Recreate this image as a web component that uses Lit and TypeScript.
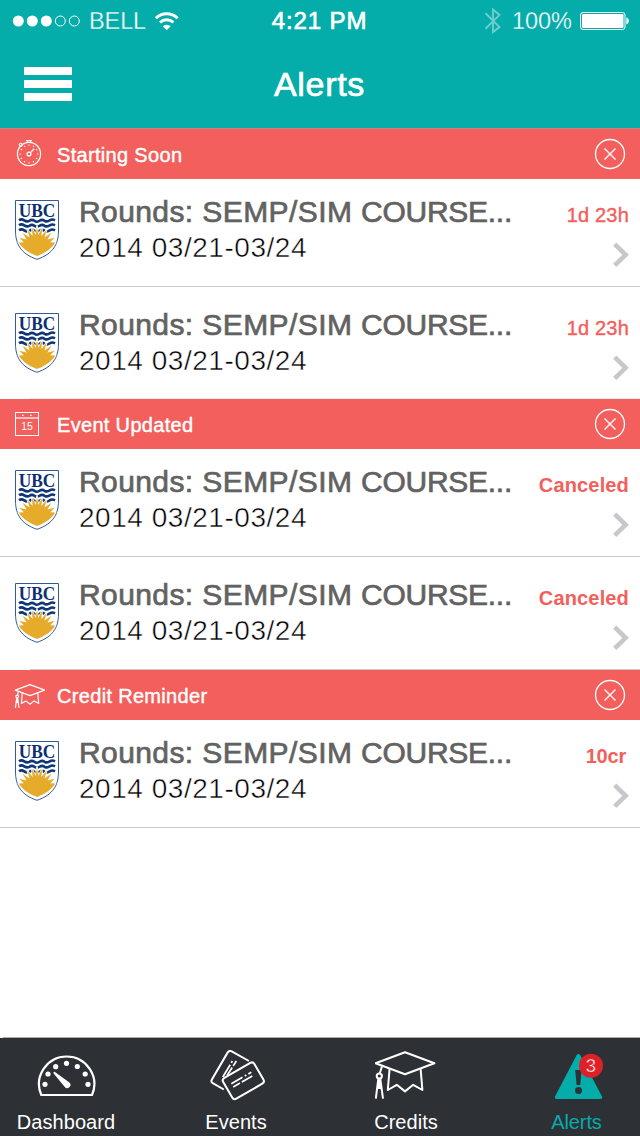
import { LitElement, html, css, svg } from "lit";
import { customElement, property } from "lit/decorators.js";

interface AlertItem {
  // The title is split before its last word so each part can carry its own tracking.
  lead: string;
  tail: string;
  date: string;
  status: string;
  tone: "medium" | "bold" | "inset";
}

interface AlertGroup {
  name: string;
  icon: "watch" | "calendar" | "cap";
  items: AlertItem[];
}

const event = (status: string, tone: AlertItem["tone"]): AlertItem => ({
  lead: "Rounds: SEMP/SIM ",
  tail: "COURSE...",
  date: "2014 03/21-03/24",
  status,
  tone,
});

const GROUPS: AlertGroup[] = [
  { name: "Starting Soon", icon: "watch", items: [event("1d 23h", "medium"), event("1d 23h", "medium")] },
  { name: "Event Updated", icon: "calendar", items: [event("Canceled", "bold"), event("Canceled", "bold")] },
  { name: "Credit Reminder", icon: "cap", items: [event("10cr", "inset")] },
];

// Mortarboard outline, shared by the section header and the tab bar.
const capShape = svg`
  <path d="M1.6 12.3 31 1.2 60.4 12.3 31 23.2Z"/>
  <path d="M15.6 17.6 13.8 39 22.8 33.8 31 40.4 39.2 33.8 48.4 39 46.6 17.6"/>
  <path d="M8 15.3 5.8 22.2"/>
  <circle cx="5.3" cy="25" r="2.6"/>
  <path d="M4.3 28 1.8 47.6M6.3 28 9 47.6M5.3 29 4.4 38M5.3 29 6.4 38"/>`;

const ticks = [30, 60, 90, 120, 150, 180, 210, 240, 270, 300, 330, 360];

const icons = {
  watch: html`<svg width="30" height="30" viewBox="14 139 30 30" fill="none" stroke="#fff">
    <circle cx="29" cy="154" r="11.6" stroke-width="1.2"/>
    <path d="M26 140.700h6M27.500 141v2M30.500 141v2" stroke-width="1.2"/>
    <circle cx="20.800" cy="144.800" r="1.600" stroke-width="1"/>
    <circle cx="29" cy="154" r="1.900" stroke-width="1.300"/>
    <path d="M30.400 152.600 34.200 148.800" stroke-width="1.300"/>
    ${ticks.map((a) => svg`<path d="M29 144.400v1.600" stroke-width=".9" transform="rotate(${a} 29 154)"/>`)}
  </svg>`,
  calendar: html`<svg width="30" height="30" viewBox="14 409 30 30" fill="none" stroke="#fff">
    <rect x="15.500" y="412.500" width="23" height="23"/>
    <path d="M16 418h22" stroke-width="2" stroke-opacity=".6"/>
    <path d="M22 415.300h1.500M30.200 415.300h1.500" stroke-width="1.200"/>
    <text x="27" y="430" fill="#fff" stroke="none" font-size="10.500" text-anchor="middle">15</text>
  </svg>`,
  cap: html`<svg width="31" height="25" viewBox="-1 -2 62 50" fill="none" stroke="#fff" stroke-width="2.400" stroke-linejoin="round">${capShape}</svg>`,
};

@customElement("ubc-crest")
class UbcCrest extends LitElement {
  static styles = css`
    :host { display: block; width: 44px; height: 60px; }
    svg { display: block; }
    text { font-family: "Liberation Serif", serif; font-weight: 700; }
    .sun { paint-order: stroke; }
  `;
  render() {
    return html`<svg width="44" height="60" viewBox="0 0 44 60">
      <path d="M.5.500H43.500V31C43.500 44 38 54 22 59.300 6 54 .5 44 .5 31Z" fill="#fff" stroke="#2f5c96"/>
      <text x="3.800" y="16.500" font-size="18.700" fill="#0c2f6f" textLength="36.600" lengthAdjust="spacingAndGlyphs">UBC</text>
      <g fill="none" stroke="#0f3676" stroke-width="2.600">
        <path d="M4 20.300q2.500-1.800 5.200 0t5.200.5q2.500-1.800 5 0 2.600 1.800 5.200 0 2.500-1.800 5 0 2.600 1.500 5.200-.5 2.500-1.500 5.200 0"/>
        <path d="M4 25.300q2.500-1.800 5.200 0t5.200.5q2.500-1.800 5 0 2.600 1.800 5.200 0 2.500-1.800 5 0 2.600 1.500 5.200-.5 2.500-1.500 5.200 0"/>
        <path d="M4 30.300q2.500-1.800 5.200 0t5.200.5q2.500-1.800 5 0 2.600 1.800 5.200 0 2.500-1.800 5 0 2.600 1.500 5.200-.5 2.500-1.500 5.200 0"/>
      </g>
      <path class="sun" d="M22 25.500 23.200 35 27.200 27.500 26.400 36 31.800 29.500 29.400 37.500 36.500 32.800 32.400 39.500 39.700 37.800 35.200 42.300 40.200 42.600C36.600 48.500 30 53.500 22 56 14 53.500 7.400 48.500 3.800 42.600L8.800 42.300 4.300 37.800 11.600 39.500 7.500 32.800 14.600 37.500 12.200 29.500 17.600 36 16.800 27.500 20.800 35Z" fill="#e6ab2b" stroke="#fff" stroke-width="1.500"/>
    </svg>`;
  }
}

@customElement("alert-row")
class AlertRow extends LitElement {
  @property({ attribute: false }) item!: AlertItem;

  static styles = css`
    :host { display: block; box-sizing: border-box; }
    .row { display: flex; }
    .crest { margin: 21px 20px 0 15px; }
    .text { flex: 1; padding-top: 15px; white-space: pre; }
    .title, .date { height: 36px; line-height: 36px; }
    .title { font-size: 30px; color: #626262; -webkit-text-stroke: 0.7px #626262; }
    .lead { letter-spacing: 0.41px; }
    .tail { letter-spacing: -0.27px; }
    .date { font-size: 28px; letter-spacing: 0.530px; color: #000; -webkit-text-stroke: 0.5px #fff; }
    .side { display: flex; flex-direction: column; align-items: flex-end; padding: 24px 11px 0 0; }
    .status { height: 24px; line-height: 24px; font-size: 20px; color: #f25f5c; }
    .medium { letter-spacing: 0.2px; -webkit-text-stroke: 0.4px #f25f5c; }
    .bold { font-weight: 700; letter-spacing: 0.15px; }
    .inset { font-weight: 700; letter-spacing: -0.2px; padding-right: 3px; }
    svg { display: block; margin-top: 15px; }
  `;
  render() {
    const { lead, tail, date, status, tone } = this.item;
    return html`<div class="row">
      <ubc-crest class="crest"></ubc-crest>
      <div class="text"><div class="title"><span class="lead">${lead}</span><span class="tail">${tail}</span></div><div class="date">${date}</div></div>
      <div class="side">
        <div class="status ${tone}">${status}</div>
        <svg width="17" height="26" viewBox="0 0 17 26"><path d="M2.700 2.200 13.600 12.800 2.700 23.400" fill="none" stroke="#c7c7cc" stroke-width="4.600"/></svg>
      </div>
    </div>`;
  }
}

@customElement("alert-group")
class AlertGroupView extends LitElement {
  @property({ attribute: false }) group!: AlertGroup;

  static styles = css`
    :host { display: block; }
    .head { display: flex; align-items: center; height: 50px; background: #f25f5c; color: #fff; }
    .icon { flex: none; box-sizing: border-box; width: 57px; height: 30px; padding-left: 14px; display: flex; align-items: center; }
    .name { flex: 1; font-size: 20px; line-height: 24px; padding-top: 2px; letter-spacing: 0.32px; -webkit-text-stroke: 0.4px #fff; }
    .close { margin-right: 14px; }
    svg { display: block; }
    .row { height: 108px; border-bottom: 1px solid #c8c7cc; }
    .row.next { height: 112px; padding-top: 5px; border: 0; background: linear-gradient(#ebe9ea, #ebe9ea) 30px 100% / 100% 1px no-repeat; }
    .updated .row.next { height: 113px; background-image: linear-gradient(#c8c7cc, #c8c7cc); }
  `;
  render() {
    const { name, icon, items } = this.group;
    return html`<section class=${icon === "calendar" ? "updated" : "plain"}>
      <div class="head">
        <div class="icon">${icons[icon]}</div>
        <div class="name">${name}</div>
        <svg class="close" width="32" height="32" viewBox="0 0 32 32" fill="none" stroke="#fff">
          <circle cx="16" cy="16" r="14.500" stroke-width="1.300"/>
          <path d="M10.500 10.500l11 11M21.500 10.500l-11 11" stroke-width="1.400"/>
        </svg>
      </div>
      ${items.map((item, i) => html`<alert-row class="row ${i ? "next" : "first"}" .item=${item}></alert-row>`)}
    </section>`;
  }
}

@customElement("app-root")
class AppRoot extends LitElement {
  static styles = css`
    :host {
      display: flex; flex-direction: column; width: 640px; height: 1136px; overflow: hidden;
      background: #fff; font-family: "Liberation Sans", Arial, sans-serif;
    }
    svg { display: block; }
    .header { height: 128px; background: #04acaa; color: #fff; border-bottom: 1px solid #c98481; }
    .status { display: grid; grid-template-columns: 1fr auto 1fr; align-items: center; height: 41px; white-space: nowrap; line-height: 28px; }
    .left, .right { display: flex; align-items: center; }
    .left { padding-left: 12px; }
    .right { justify-content: flex-end; padding-right: 10px; }
    .carrier { margin: 1px 8px 0 7px; font-size: 23.500px; letter-spacing: -0.1px; -webkit-text-stroke: 0.3px #04acaa; }
    .time { font-size: 24px; letter-spacing: 0.900px; padding: 0 2px 0 1px; -webkit-text-stroke: 0.700px #fff; }
    .percent { margin: 1px 8px 0 10px; font-size: 23.500px; -webkit-text-stroke: 0.300px #04acaa; }
    .nav { display: grid; grid-template-columns: 1fr auto 1fr; align-items: center; height: 86px; padding-left: 24px; padding-right: 26px; }
    .menu { display: grid; gap: 5px; width: 48px; }
    .bar { height: 8px; background: #fff; }
    .heading { font-size: 34px; letter-spacing: 0.700px; line-height: 40px; padding-left: 1px; -webkit-text-stroke: 0.700px #fff; }
    .list { flex: 1; }
    .tabs {
      display: flex; gap: 60px; box-sizing: border-box; height: 99px; padding: 13px 9px 0 11px;
      background: linear-gradient(#a9aaac, #a9aaac) 3px 0 / 100% 1px no-repeat, linear-gradient(#fff 1px, #2d3035 1px);
    }
    .tab { width: 110px; flex: none; display: flex; flex-direction: column; align-items: center; color: #fff; }
    .label { font-size: 20px; line-height: 24px; margin-top: 8px; letter-spacing: 0.050px; }
    .active { color: #04acaa; }
    .active .label { padding-left: 1px; letter-spacing: -0.1px; }
  `;

  render() {
    return html`
      <header class="header">
        <div class="status">
          <div class="left">
            <svg width="70" height="14" viewBox="0 0 70 14" fill="#fff">
              ${[6.300, 20.300, 34.300].map((x) => svg`<circle cx=${x} cy="7" r="5.500"/>`)}
              ${[48.300, 62.300].map((x) => svg`<circle cx=${x} cy="7" r="5" fill="none" stroke="#fff"/>`)}
            </svg>
            <span class="carrier">BELL</span>
            <svg width="26" height="20" viewBox="154 10 26 20" fill="none" stroke="#fff" stroke-width="3">
              <path d="M155.800 17.300a15.600 15.600 0 0 1 21.800 0M160 21.500a9.800 9.800 0 0 1 13.400 0"/>
              <path d="M162.800 25.200a5.700 5.700 0 0 1 7.800 0L166.700 29.200Z" fill="#fff" stroke="none"/>
            </svg>
          </div>
          <span class="time">4:21 PM</span>
          <div class="right">
            <svg width="18" height="28" viewBox="484 6.500 18 28" fill="none" stroke="#fff" stroke-opacity=".42" stroke-width="1.900">
              <path d="M485.500 12.800 499.500 26.600 493 31.600V9L499.500 14.400 485.500 28.200"/>
            </svg>
            <span class="percent">100%</span>
            <svg width="50" height="20" viewBox="580 10.500 50 20">
              <rect x="580.500" y="12" width="44.500" height="17" rx="2.500" fill="none" stroke="#fff" stroke-width="1"/>
              <rect x="582" y="13.500" width="41.500" height="14" rx="1.200" fill="#fff"/>
              <path d="M626.300 17.100c3.400 1 3.400 5.800 0 6.800Z" fill="#fff"/>
            </svg>
          </div>
        </div>
        <div class="nav">
          <div class="menu"><div class="bar"></div><div class="bar"></div><div class="bar"></div></div>
          <div class="heading">Alerts</div>
        </div>
      </header>
      <main class="list">
        ${GROUPS.map((g) => html`<alert-group .group=${g}></alert-group>`)}
      </main>
      <nav class="tabs">
        <div class="tab">
          <svg width="62" height="52" viewBox="35 1050 62 52" fill="none" stroke="#fff">
            <path d="M41.300 1095A27.600 27.600 0 1 1 92 1095Z" stroke-width="2.200" stroke-linejoin="round"/>
            <g fill="#fff" stroke="none">
              ${[[45, 1084.300], [48, 1074], [55.700, 1066.700], [66.500, 1063.300], [77.300, 1066.500], [85.200, 1074], [88, 1084.300]].map(
                ([x, y]) => svg`<circle cx=${x} cy=${y} r="2.600"/>`
              )}
              <path d="M54.600 1071.800 69.400 1082.600A3.200 3.200 0 1 1 64.600 1086.800L53.400 1073.200Q53.400 1071.600 54.600 1071.800Z"/>
            </g>
          </svg>
          <span class="label">Dashboard</span>
        </div>
        <div class="tab">
          <svg width="62" height="52" viewBox="205 1050 62 52" fill="none" stroke="#fff" stroke-width="2">
            <path d="M223.800 1089.500 212.800 1083.200Q210.500 1081.800 211.900 1079.400L227.700 1052.400Q229.300 1050.200 231.700 1051.400L249 1061"/>
            <rect x="225.300" y="1068.800" width="36" height="24" rx="3" transform="rotate(-30 243.300 1080.800)"/>
            <g stroke-width="1.700">
              <path d="M231.300 1062.800 232.300 1061M230.200 1064.800 222.800 1077M236.300 1061 233.200 1066M232.200 1067.500 227 1075.500"/>
              <path d="M231.300 1083.700 242.500 1077.300M244.800 1076 246.300 1075.100M248.300 1074 251.300 1072.300M233.200 1087 240 1083.100M241.800 1082 244.500 1080.500M242.300 1081.700 252.300 1076"/>
            </g>
          </svg>
          <span class="label">Events</span>
        </div>
        <div class="tab">
          <svg width="62" height="52" viewBox="1 -1 62 52" fill="none" stroke="#fff" stroke-width="2" stroke-linejoin="round">${capShape}</svg>
          <span class="label">Credits</span>
        </div>
        <div class="tab active">
          <svg width="62" height="52" viewBox="545 1050 62 52">
            <path d="M576.600 1055.300Q578.500 1052.600 580.300 1055.300L602 1096.500Q602.800 1099 600 1099H557Q554.200 1099 555 1096.500Z" fill="#04acaa"/>
            <path d="M575.200 1070h6.400L580.200 1085h-3.600Z" fill="#2d3035"/>
            <circle cx="578.500" cy="1090.400" r="3.500" fill="#2d3035"/>
            <circle cx="591" cy="1065.800" r="12" fill="#e02027"/>
            <text x="591" y="1072.300" font-size="18.500" fill="#fff" stroke="#e02027" stroke-width=".4" text-anchor="middle">3</text>
          </svg>
          <span class="label">Alerts</span>
        </div>
      </nav>
    `;
  }
}
